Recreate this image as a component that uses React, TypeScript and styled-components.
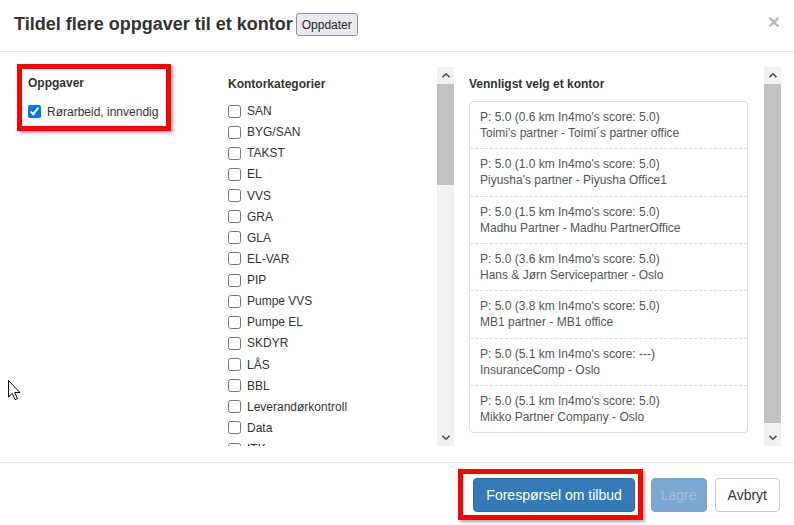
import React from "react";
import styled, { createGlobalStyle } from "styled-components";

const Global = createGlobalStyle`
  html, body { margin: 0; padding: 0; background: #fff; }
  * { box-sizing: border-box; }
`;

const Page = styled.div`
  position: relative;
  width: 794px;
  height: 525px;
  overflow: hidden;
  background: #fff;
  display: flex;
  flex-direction: column;
  font-family: "Liberation Sans", Arial, sans-serif;
  font-size: 12px;
  color: #333;
`;

const Header = styled.div`
  height: 52px;
  flex-shrink: 0;
  display: flex;
  align-items: flex-start;
  padding: 12px 14px 0 14px;
  border-bottom: 1px solid #e5e5e5;
`;

const Title = styled.h4`
  margin: 0;
  font-size: 18px;
  line-height: 24px;
  font-weight: 700;
  color: #333;
`;

const SmallButton = styled.button`
  margin: 1px 0 0 3px;
  height: 23px;
  padding: 0 5px;
  font-family: "Liberation Sans", Arial, sans-serif;
  font-size: 12px;
  color: #222;
  background: #e9e9ed;
  border: 1px solid #8f8f9d;
  border-radius: 3px;
`;

const Close = styled.span`
  margin-left: auto;
  margin-top: -1px;
  font-size: 21px;
  line-height: 21px;
  font-weight: 700;
  color: #000;
  opacity: 0.28;
`;

const Body = styled.div`
  height: 410px;
  flex-shrink: 0;
  display: grid;
  grid-template-columns: 207px 230px 327px;
  align-items: start;
  padding: 15px 0 16px 17px;
`;

const LeftCol = styled.div`
  display: flex;
  align-items: flex-start;
`;

const RedFrame = styled.div`
  border: 5px solid #f00;
  box-shadow: 2px 2px 3px rgba(0, 0, 0, 0.35);
`;

const TaskFrame = styled(RedFrame)`
  margin-top: -3px;
  padding: 6px 8px 4px 6px;
`;

const Label = styled.div<{ $gap: number }>`
  font-weight: 700;
  line-height: 17px;
  color: #333;
  margin-bottom: ${(p) => p.$gap}px;
`;

const CheckRow = styled.label`
  display: flex;
  align-items: center;
  height: 21.13px;
  line-height: 16px;
  color: #333;
  white-space: nowrap;
`;

const Check = styled.input`
  width: 13px;
  height: 13px;
  margin: 0 6px 0 0;
  flex-shrink: 0;
`;

const ScrollPane = styled.div`
  display: flex;
  height: 379px;
`;

const ScrollContent = styled.div<{ $padLeft: number; $padRight: number }>`
  flex: 1;
  min-width: 0;
  overflow: hidden;
  padding: 8.5px ${(p) => p.$padRight}px 0 ${(p) => p.$padLeft}px;
`;

const Bar = styled.div`
  width: 17px;
  flex-shrink: 0;
  display: flex;
  flex-direction: column;
  background: #f1f1f1;
`;

const BarButton = styled.div`
  height: 17px;
  flex-shrink: 0;
  display: flex;
  align-items: center;
  justify-content: center;
  background: #f1f1f1;
`;

const Thumb = styled.div`
  flex-shrink: 0;
  background: #c1c1c1;
`;

const BarRest = styled.div`
  flex: 1;
`;

const OfficeList = styled.div`
  border: 1px solid #ddd;
  border-radius: 4px;
  background: #fff;
`;

const OfficeItem = styled.div`
  padding: 7px 10px 7.33px;
  line-height: 16px;
  color: #555;
  border-bottom: 1px dashed #ddd;
  &:last-child {
    border-bottom: none;
  }
`;

const Footer = styled.div`
  height: 63px;
  flex-shrink: 0;
  display: flex;
  align-items: flex-start;
  justify-content: flex-end;
  gap: 8px;
  padding: 15px 14px 0 0;
  border-top: 1px solid #e5e5e5;
`;

const ButtonFrame = styled(RedFrame)`
  margin-top: -9px;
  padding: 4px 3px 3px 10px;
`;

const Btn = styled.button<{ $kind: "primary" | "disabled" | "default" }>`
  height: 34px;
  padding: 0 ${(p) => (p.$kind === "disabled" ? 9 : 12)}px;
  font-family: "Liberation Sans", Arial, sans-serif;
  font-size: 14px;
  border-radius: 4px;
  border: 1px solid
    ${(p) => (p.$kind === "primary" ? "#2e6da4" : p.$kind === "disabled" ? "#7aa6d0" : "#ccc")};
  background: ${(p) => (p.$kind === "primary" ? "#337ab7" : p.$kind === "disabled" ? "#7ba7d3" : "#fff")};
  color: ${(p) => (p.$kind === "primary" ? "#fff" : p.$kind === "disabled" ? "#a9bed6" : "#333")};
`;

const Cursor = styled.svg`
  position: absolute;
  left: 8px;
  top: 380px;
`;

const Chevron = ({ down }: { down?: boolean }) => (
  <svg width="8" height="5" viewBox="0 0 8 5">
    <path
      d={down ? "M0.5 0.8 L4 4.2 L7.5 0.8" : "M0.5 4.2 L4 0.8 L7.5 4.2"}
      fill="none"
      stroke="#505050"
      strokeWidth="1.6"
    />
  </svg>
);

const ScrollBar = ({ thumb }: { thumb: number }) => (
  <Bar>
    <BarButton>
      <Chevron />
    </BarButton>
    <Thumb style={{ height: thumb }} />
    <BarRest />
    <BarButton>
      <Chevron down />
    </BarButton>
  </Bar>
);

const categories = [
  "SAN",
  "BYG/SAN",
  "TAKST",
  "EL",
  "VVS",
  "GRA",
  "GLA",
  "EL-VAR",
  "PIP",
  "Pumpe VVS",
  "Pumpe EL",
  "SKDYR",
  "LÅS",
  "BBL",
  "Leverandørkontroll",
  "Data",
  "ITK",
];

const offices = [
  ["P: 5.0 (0.6 km In4mo's score: 5.0)", "Toimi's partner - Toimi´s partner office"],
  ["P: 5.0 (1.0 km In4mo's score: 5.0)", "Piyusha's partner - Piyusha Office1"],
  ["P: 5.0 (1.5 km In4mo's score: 5.0)", "Madhu Partner - Madhu PartnerOffice"],
  ["P: 5.0 (3.6 km In4mo's score: 5.0)", "Hans & Jørn Servicepartner - Oslo"],
  ["P: 5.0 (3.8 km In4mo's score: 5.0)", "MB1 partner - MB1 office"],
  ["P: 5.0 (5.1 km In4mo's score: ---)", "InsuranceComp - Oslo"],
  ["P: 5.0 (5.1 km In4mo's score: 5.0)", "Mikko Partner Company - Oslo"],
];

export default function App() {
  return (
    <>
      <Global />
      <Page>
        <Header>
          <Title>Tildel flere oppgaver til et kontor</Title>
          <SmallButton>Oppdater</SmallButton>
          <Close>×</Close>
        </Header>
        <Body>
          <LeftCol>
            <TaskFrame>
              <Label $gap={9}>Oppgaver</Label>
              <CheckRow>
                <Check type="checkbox" defaultChecked />
                Rørarbeid, innvendig
              </CheckRow>
            </TaskFrame>
          </LeftCol>
          <ScrollPane>
            <ScrollContent $padLeft={4} $padRight={4}>
              <Label $gap={8}>Kontorkategorier</Label>
              {categories.map((c) => (
                <CheckRow key={c}>
                  <Check type="checkbox" />
                  {c}
                </CheckRow>
              ))}
            </ScrollContent>
            <ScrollBar thumb={101} />
          </ScrollPane>
          <ScrollPane>
            <ScrollContent $padLeft={15} $padRight={16}>
              <Label $gap={8.5}>Vennligst velg et kontor</Label>
              <OfficeList>
                {offices.map(([a, b]) => (
                  <OfficeItem key={b}>
                    <div>{a}</div>
                    <div>{b}</div>
                  </OfficeItem>
                ))}
              </OfficeList>
            </ScrollContent>
            <ScrollBar thumb={339} />
          </ScrollPane>
        </Body>
        <Footer>
          <ButtonFrame>
            <Btn $kind="primary">Forespørsel om tilbud</Btn>
          </ButtonFrame>
          <Btn $kind="disabled" disabled>
            Lagre
          </Btn>
          <Btn $kind="default">Avbryt</Btn>
        </Footer>
        <Cursor width="13" height="21" viewBox="0 0 13 21">
          <path
            d="M0.5 0.5 L0.5 17 L4.3 13.4 L7 19.6 L9.4 18.6 L6.8 12.6 L12 12.6 Z"
            fill="#fff"
            stroke="#000"
            strokeWidth="1"
            strokeLinejoin="miter"
          />
        </Cursor>
      </Page>
    </>
  );
}
